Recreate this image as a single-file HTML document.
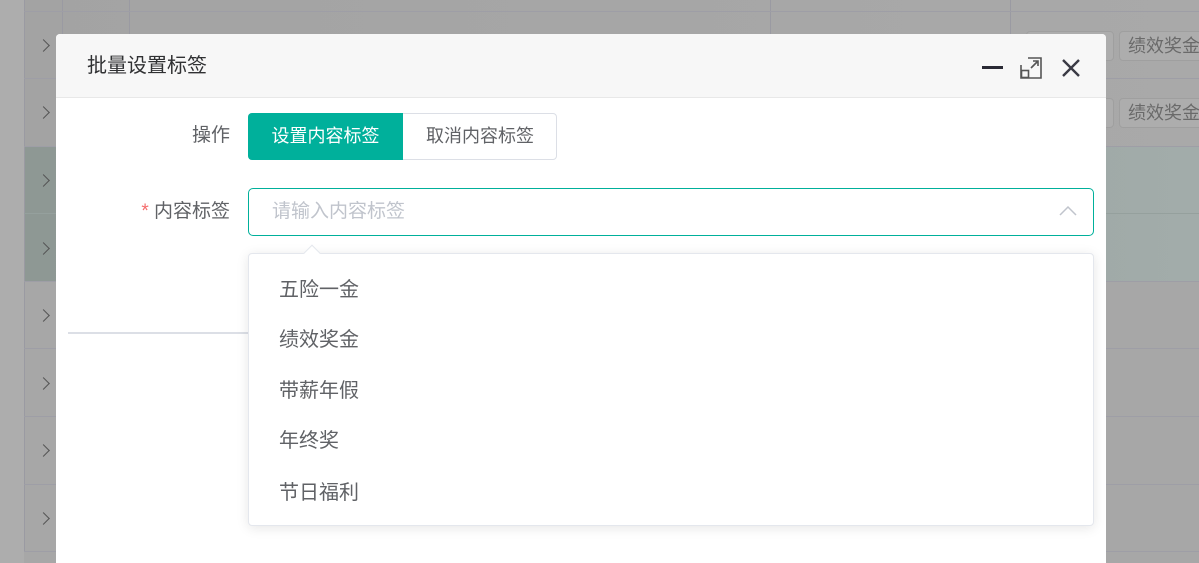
<!DOCTYPE html>
<html><head><meta charset="utf-8"><style>
*{box-sizing:border-box;margin:0;padding:0}
html,body{width:1199px;height:563px;overflow:hidden}
body{position:relative;background:#a7a7a7;font-family:"Liberation Sans","Noto Sans CJK SC",sans-serif}
.a{position:absolute}
.vl{position:absolute;top:0;height:551px;width:1px;background:#9a9aa2}
.hl{position:absolute;left:24px;right:0;height:1px;background:#9e9ea6}
.chev{position:absolute;left:39px;width:9px;height:9px;border-right:1.5px solid #555;border-top:1.5px solid #555;transform:rotate(45deg)}
.tag{position:absolute;height:30px;border:1px solid #9f9f9f;border-radius:4px;background:#adadad;color:#6a6a6a;font-size:18px;line-height:28px;padding-left:8px;white-space:nowrap}
.item{position:absolute;left:30px;font-size:20px;color:#606266;line-height:24px}
</style></head><body>
<div class="a" style="left:24px;top:0;width:1175px;height:147px;background:linear-gradient(90deg,#a3a3a3,#a9a9a9)"></div>
<div class="a" style="left:24px;top:147px;width:1175px;height:134px;background:linear-gradient(90deg,#8e9894,#a2acaa)"></div>
<div class="a" style="left:0;top:0;width:24px;height:563px;background:#adadad"></div>
<div class="vl" style="left:24px"></div><div class="vl" style="left:62px"></div><div class="vl" style="left:129px"></div><div class="vl" style="left:770px"></div><div class="vl" style="left:1010px"></div>
<div class="hl" style="top:11px"></div><div class="hl" style="top:78px"></div><div class="hl" style="top:146px"></div><div class="hl" style="top:213px;background:#95a09d"></div><div class="hl" style="top:281px"></div><div class="hl" style="top:348px"></div><div class="hl" style="top:416px"></div><div class="hl" style="top:484px"></div><div class="hl" style="top:551px"></div>
<div class="chev" style="top:41px"></div><div class="chev" style="top:108px"></div><div class="chev" style="top:176px"></div><div class="chev" style="top:244px"></div><div class="chev" style="top:311px"></div><div class="chev" style="top:379px"></div><div class="chev" style="top:446px"></div><div class="chev" style="top:514px"></div>
<div class="tag" style="left:1026px;top:31px;width:88px"></div><div class="tag" style="left:1119px;top:31px;width:90px">绩效奖金</div>
<div class="tag" style="left:1026px;top:98px;width:88px"></div><div class="tag" style="left:1119px;top:98px;width:90px">绩效奖金</div>

<div class="a" style="left:56px;top:34px;width:1050px;height:529px;background:#fff;border-radius:4px 4px 0 0;overflow:hidden">
 <div class="a" style="left:0;top:0;width:1050px;height:64px;background:#f7f7f7;border-bottom:1px solid #e8e8e8"></div>
 <div class="a" style="left:31px;top:19px;font-size:20px;line-height:26px;color:#303133">批量设置标签</div>
 <div class="a" style="left:926px;top:32px;width:21px;height:3px;background:#2a2a35"></div>
 <svg class="a" style="left:964px;top:23px" width="22" height="22" viewBox="0 0 22 22" fill="none" stroke="#555" stroke-width="1.6"><path d="M8 1H21V21H1V8"/><rect x="1.5" y="13.5" width="7" height="7"/><path d="M11 11L18 4M13 4H18V9"/></svg>
 <svg class="a" style="left:1005px;top:24px" width="20" height="20" viewBox="0 0 20 20" stroke="#3a3a44" stroke-width="2.4"><path d="M2 2L18 18M18 2L2 18"/></svg>
 <div class="a" style="left:60px;width:114px;text-align:right;top:89px;font-size:19px;line-height:26px;color:#606266">操作</div>
 <div class="a" style="left:192px;top:79px;width:309px;height:47px;border:1px solid #dcdfe6;border-radius:4px"></div>
 <div class="a" style="left:192px;top:79px;width:155px;height:47px;background:#00b09b;border-radius:4px 0 0 4px;color:#fff;font-size:18px;line-height:47px;text-align:center">设置内容标签</div>
 <div class="a" style="left:347px;top:79px;width:154px;height:47px;color:#606266;font-size:18px;line-height:47px;text-align:center">取消内容标签</div>
 <div class="a" style="left:20px;width:154px;text-align:right;top:165px;font-size:19px;line-height:26px;color:#606266"><span style="color:#f56c6c">*</span> 内容标签</div>
 <div class="a" style="left:192px;top:154px;width:846px;height:48px;border:1px solid #00b09b;border-radius:5px"></div>
 <div class="a" style="left:216px;top:165px;font-size:19px;line-height:26px;color:#c0c4cc">请输入内容标签</div>
 <svg class="a" style="left:1003px;top:171px" width="18" height="12" viewBox="0 0 18 12" fill="none" stroke="#c0c4cc" stroke-width="1.5"><path d="M1 10L9 2L17 10"/></svg>
 <div class="a" style="left:12px;top:298px;width:180px;height:2px;background:#dcdfe6"></div>
</div>
<div class="a" style="left:248px;top:253px;width:846px;height:273px;background:#fff;border:1px solid #e4e7ed;border-radius:4px;box-shadow:0 2px 12px rgba(0,0,0,.1)">
 <div class="a" style="left:57px;top:-7px;width:12px;height:12px;background:#fff;border-left:1px solid #e4e7ed;border-top:1px solid #e4e7ed;transform:rotate(45deg)"></div>
 <div class="item" style="top:24px">五险一金</div>
 <div class="item" style="top:74px">绩效奖金</div>
 <div class="item" style="top:125px">带薪年假</div>
 <div class="item" style="top:175px">年终奖</div>
 <div class="item" style="top:227px">节日福利</div>
</div>
</body></html>
